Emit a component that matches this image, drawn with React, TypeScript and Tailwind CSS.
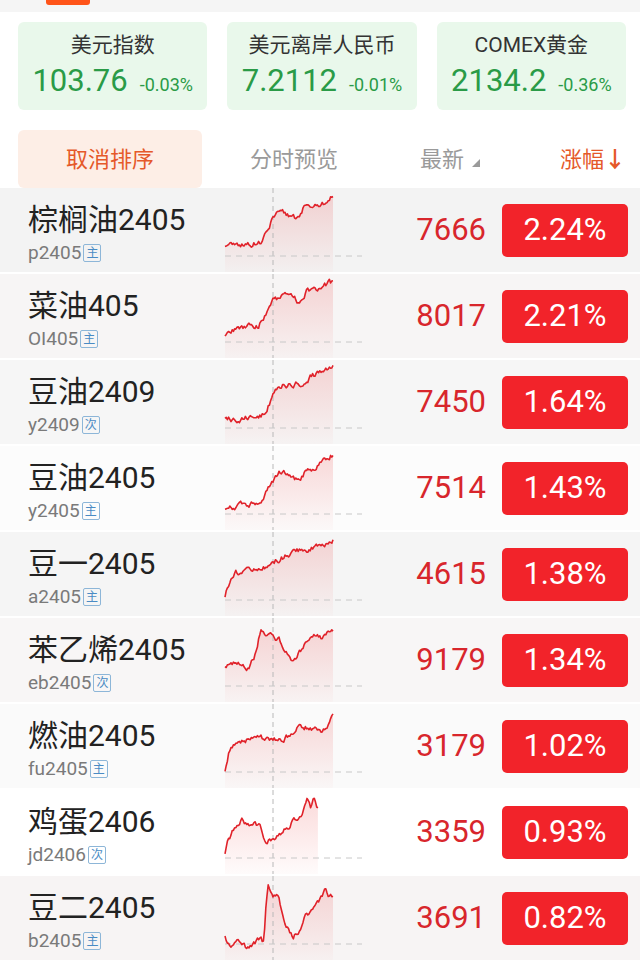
import React from "react";

type Row = {
  name: string;
  code: string;
  tag: string;
  price: string;
  pct: string;
  bg: string;
  end: number;
  seed: number;
  keys: [number, number][];
};

const rows: Row[] = [
  { name: "棕榈油2405", code: "p2405", tag: "主", price: "7666", pct: "2.24%", bg: "#f3f3f3", end: 1, seed: 3,
    keys: [[0, 58], [0.05, 52], [0.1, 56], [0.25, 55], [0.33, 54], [0.4, 40], [0.46, 27], [0.55, 24], [0.62, 30], [0.68, 31], [0.74, 18], [0.85, 17], [0.92, 14], [1, 7]] },
  { name: "菜油405", code: "OI405", tag: "主", price: "8017", pct: "2.21%", bg: "#f7f5f5", end: 1, seed: 7,
    keys: [[0, 60], [0.1, 55], [0.3, 52], [0.36, 45], [0.45, 25], [0.6, 22], [0.68, 28], [0.75, 17], [0.9, 14], [0.95, 10], [1, 8]] },
  { name: "豆油2409", code: "y2409", tag: "次", price: "7450", pct: "1.64%", bg: "#f6f6f6", end: 1, seed: 11,
    keys: [[0, 60], [0.15, 58], [0.33, 56], [0.4, 45], [0.5, 26], [0.65, 24], [0.72, 22], [0.8, 16], [0.9, 12], [1, 6]] },
  { name: "豆油2405", code: "y2405", tag: "主", price: "7514", pct: "1.43%", bg: "#fcfcfc", end: 1, seed: 5,
    keys: [[0, 62], [0.2, 58], [0.35, 56], [0.38, 48], [0.45, 35], [0.5, 24], [0.6, 30], [0.68, 34], [0.75, 24], [0.85, 20], [1, 8]] },
  { name: "豆一2405", code: "a2405", tag: "主", price: "4615", pct: "1.38%", bg: "#f5f5f5", end: 1, seed: 13,
    keys: [[0, 66], [0.03, 54], [0.1, 42], [0.2, 38], [0.3, 39], [0.45, 30], [0.6, 22], [0.8, 16], [1, 8]] },
  { name: "苯乙烯2405", code: "eb2405", tag: "次", price: "9179", pct: "1.34%", bg: "#f8f6f6", end: 1, seed: 17,
    keys: [[0, 48], [0.15, 45], [0.22, 52], [0.27, 40], [0.33, 12], [0.4, 18], [0.5, 22], [0.58, 35], [0.63, 42], [0.72, 30], [0.8, 18], [0.9, 20], [1, 12]] },
  { name: "燃油2405", code: "fu2405", tag: "主", price: "3179", pct: "1.02%", bg: "#fafafa", end: 1, seed: 19,
    keys: [[0, 66], [0.04, 45], [0.1, 38], [0.3, 34], [0.5, 36], [0.6, 32], [0.7, 22], [0.8, 24], [0.9, 26], [0.95, 20], [1, 8]] },
  { name: "鸡蛋2406", code: "jd2406", tag: "次", price: "3359", pct: "0.93%", bg: "#ffffff", end: 0.86, seed: 23,
    keys: [[0, 66], [0.03, 48], [0.1, 36], [0.16, 30], [0.23, 36], [0.32, 34], [0.38, 52], [0.45, 48], [0.52, 42], [0.6, 34], [0.7, 26], [0.76, 7], [0.79, 18], [0.82, 10], [0.86, 20]] },
  { name: "豆二2405", code: "b2405", tag: "主", price: "3691", pct: "0.82%", bg: "#f7f4f4", end: 1, seed: 29,
    keys: [[0, 60], [0.05, 70], [0.12, 66], [0.2, 72], [0.3, 64], [0.36, 66], [0.38, 30], [0.4, 12], [0.45, 20], [0.5, 22], [0.55, 45], [0.6, 55], [0.63, 62], [0.68, 55], [0.75, 40], [0.85, 30], [0.93, 14], [0.96, 20], [1, 22]] },
];

function rng(seed: number) {
  let s = seed * 9301 + 49297;
  return () => {
    s = (s * 16807) % 2147483647;
    return s / 2147483647;
  };
}

function interp(keys: [number, number][], t: number) {
  for (let i = 1; i < keys.length; i++) {
    if (t <= keys[i][0]) {
      const [t0, y0] = keys[i - 1];
      const [t1, y1] = keys[i];
      return y0 + ((t - t0) / (t1 - t0 || 1)) * (y1 - y0);
    }
  }
  return keys[keys.length - 1][1];
}

function buildPath(r: Row) {
  const rand = rng(r.seed);
  const n = Math.round(90 * r.end);
  const pts: [number, number][] = [];
  let walk = 0;
  for (let i = 0; i <= n; i++) {
    const t = (i / n) * r.end;
    walk = walk * 0.6 + (rand() - 0.5) * 5;
    pts.push([3 + t * 108, interp(r.keys, t) + walk]);
  }
  const line = pts.map((p, i) => `${i ? "L" : "M"}${p[0].toFixed(1)} ${p[1].toFixed(1)}`).join(" ");
  const last = pts[pts.length - 1];
  const area = `${line} L${last[0].toFixed(1)} 84 L3 84 Z`;
  return { line, area };
}

function Spark({ r, i }: { r: Row; i: number }) {
  const { line, area } = buildPath(r);
  const id = `g${i}`;
  return (
    <svg width="140" height="84" viewBox="0 0 140 84" className="shrink-0">
      <defs>
        <linearGradient id={id} x1="0" y1="0" x2="0" y2="1">
          <stop offset="0" stopColor="#ea4a4a" stopOpacity="0.2" />
          <stop offset="1" stopColor="#ea4a4a" stopOpacity="0.02" />
        </linearGradient>
      </defs>
      <path d={area} fill={`url(#${id})`} />
      <line x1="51" y1="0" x2="51" y2="84" stroke="#b8b8b8" strokeWidth="1" strokeDasharray="5 4" />
      <line x1="3" y1="68" x2="140" y2="68" stroke="#c8c8c8" strokeWidth="1" strokeDasharray="6 5" />
      <path d={line} fill="none" stroke="#e0222a" strokeWidth="1.6" strokeLinejoin="round" />
    </svg>
  );
}

const font = { fontFamily: "Roboto, 'Noto Sans CJK SC', sans-serif" };

const cards = [
  { title: "美元指数", value: "103.76", pct: "-0.03%" },
  { title: "美元离岸人民币", value: "7.2112", pct: "-0.01%" },
  { title: "COMEX黄金", value: "2134.2", pct: "-0.36%" },
];

export default function App() {
  return (
    <div className="w-[640px] h-[970px] overflow-hidden bg-white" style={font}>
      <div className="h-[12px] bg-[#f5f5f5] pl-[46px]">
        <div className="w-[44px] h-[5px] rounded-b-[3px] bg-[#ff5419]" />
      </div>

      <div className="mt-[10px] pl-[18px] pr-[14px] grid grid-cols-3 gap-[20px]">
        {cards.map((c) => (
          <div key={c.title} className="h-[88px] rounded-[6px] bg-[#e9f8eb] flex flex-col items-center pt-[9px]">
            <div className="text-[21px] leading-[28px] text-[#333]">{c.title}</div>
            <div className="mt-[4px] flex items-baseline gap-[12px] text-[#2a9b47]">
              <span className="text-[31px] leading-[36px]">{c.value}</span>
              <span className="text-[18px]">{c.pct}</span>
            </div>
          </div>
        ))}
      </div>

      <div className="mt-[20px] h-[58px] flex items-center pl-[18px] pr-[14px]">
        <div className="w-[184px] h-[58px] rounded-[6px] bg-[#fdeee6] flex items-center justify-center text-[22px] text-[#e5592a]">
          取消排序
        </div>
        <div className="w-[184px] text-center text-[22px] text-[#9a9a9a]">分时预览</div>
        <div className="pl-[34px] flex items-center text-[22px] text-[#9a9a9a]">
          最新
          <svg width="8" height="8" viewBox="0 0 8 8" className="ml-[8px] mt-[8px]">
            <polygon points="8,0 8,8 0,8" fill="#9a9a9a" />
          </svg>
        </div>
        <div className="ml-auto text-[22px] text-[#e5592a]">
          涨幅<span className="font-bold">↓</span>
        </div>
      </div>

      <div>
        {rows.map((r, i) => (
          <div
            key={r.code}
            className="h-[86px] border-b-2 border-white flex items-center"
            style={{ backgroundColor: r.bg }}
          >
            <div className="w-[222px] self-stretch pl-[28px] pt-[14px] flex flex-col">
              <div className="text-[30px] leading-[36px] text-[#222]">{r.name}</div>
              <div className="mt-[4px] flex items-center text-[19px] leading-[22px] text-[#7a7a7a]">
                {r.code}
                <span className="ml-[2px] w-[18px] h-[18px] border border-[#8db6d8] rounded-[2px] text-[12px] leading-[16px] text-center text-[#4a8bc4]">
                  {r.tag}
                </span>
              </div>
            </div>
            <Spark r={r} i={i} />
            <div className="flex-1 text-right pr-[16px] text-[31px] text-[#d8262c]">{r.price}</div>
            <div className="mr-[12px] w-[126px] h-[53px] rounded-[5px] bg-[#f2232a] flex items-center justify-center text-[31px] text-white">
              {r.pct}
            </div>
          </div>
        ))}
      </div>
    </div>
  );
}
